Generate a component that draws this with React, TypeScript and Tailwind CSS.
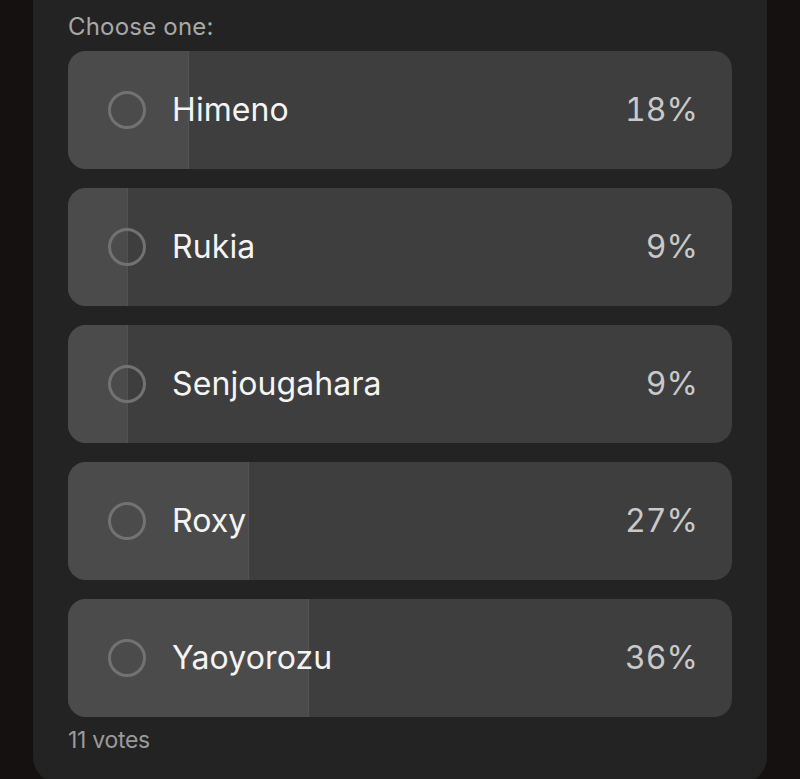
import React from 'react';

interface PollOption {
    label: string;
    votes: number;
}

const totalVotes = 11;

const options: PollOption[] = [
    { label: 'Himeno', votes: 2 },
    { label: 'Rukia', votes: 1 },
    { label: 'Senjougahara', votes: 1 },
    { label: 'Roxy', votes: 3 },
    { label: 'Yaoyorozu', votes: 4 },
];

const PollRow: React.FC<PollOption> = ({ label, votes }) => {
    const share = (votes / totalVotes) * 100;
    return (
        <div className="relative h-[118px] rounded-[18px] bg-[#3e3e3e] overflow-hidden">
            <div
                className="absolute inset-y-0 left-0 bg-[#4b4b4b] border-r border-[#525252]"
                style={{ width: `${share}%` }}
            />
            <div className="relative h-full flex items-center pl-[40px] pr-[34px]">
                <div className="w-[38px] h-[38px] rounded-full border-[3px] border-[#727272] shrink-0" />
                <span className="ml-[26px] text-[32px] text-[#f4f4f4] tracking-[0.1px]">{label}</span>
                <span className="ml-auto text-[32px] text-[#c9c9c9] tabular-nums">{Math.round(share)}%</span>
            </div>
        </div>
    );
};

export default function App() {
    return (
        <div
            className="h-[779px] overflow-hidden bg-[#141110] px-[33px]"
            style={{ fontFamily: 'Inter, "Liberation Sans", sans-serif' }}
        >
            <div className="h-[783px] rounded-b-[26px] bg-[#232323] px-[35px] pt-[13px]">
                <div className="text-[24px] leading-[28px] text-[#a8a8a8] tracking-[0.2px]">Choose one:</div>
                <div className="mt-[10px] flex flex-col gap-[19px]">
                    {options.map((o) => (
                        <PollRow key={o.label} {...o} />
                    ))}
                </div>
                <div className="mt-[9px] text-[23px] leading-[28px] text-[#9a9a9a] tracking-[-0.3px]">
                    {totalVotes} votes
                </div>
            </div>
        </div>
    );
}
